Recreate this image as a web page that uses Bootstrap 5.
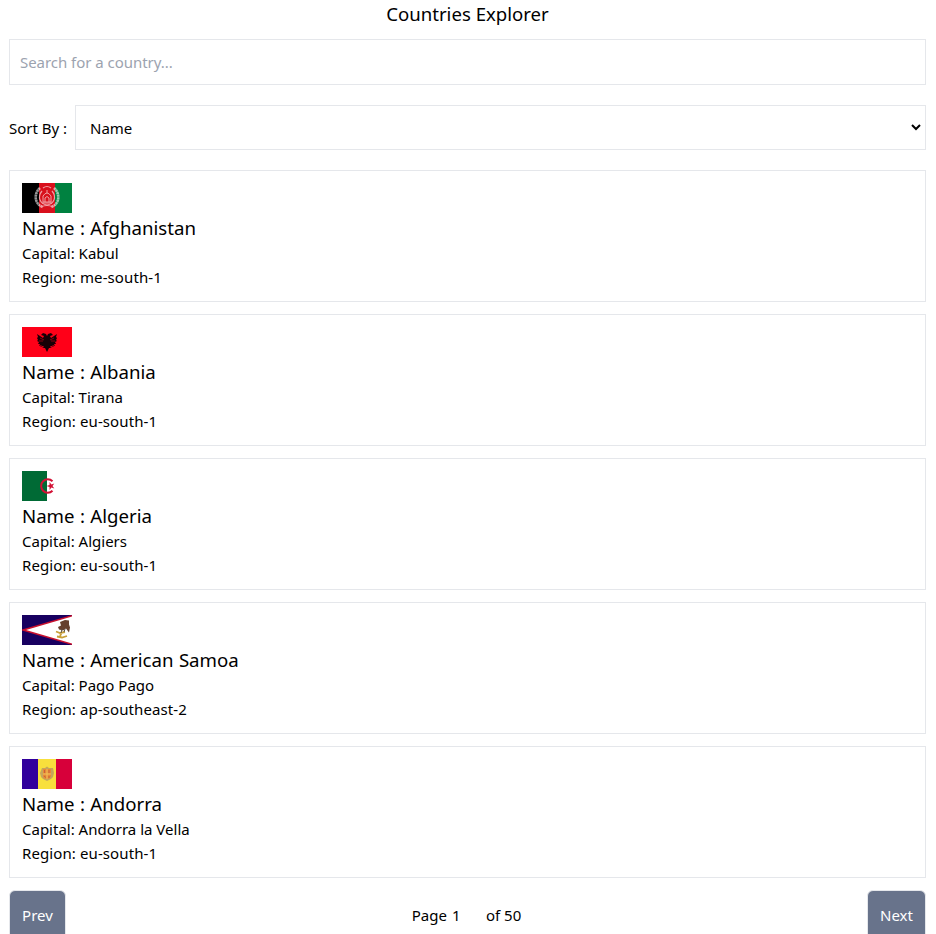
<!DOCTYPE html>
<html lang="en">
<head>
<meta charset="utf-8">
<meta name="viewport" content="width=device-width, initial-scale=1">
<title>Countries Explorer</title>
<link href="https://cdn.jsdelivr.net/npm/bootstrap@5.3.0/dist/css/bootstrap.min.css" rel="stylesheet">
<style>
body{font-family:"Segoe UI","Noto Sans","Open Sans",sans-serif;font-size:15px;line-height:24px;color:#000;background:#fff}
.explorer{padding:0 10px 0 9px}
.title{font-size:18.6px;line-height:28px;margin-bottom:11px}
.box,.form-control.box,.form-select.box{border:1px solid #e5e7eb;border-radius:0;color:#000;background-color:#fff}
.search.form-control{height:46px;padding:0 10px;font-size:15px;letter-spacing:-.04px;margin-bottom:20px}
.search::placeholder{color:#9ca3af;opacity:1}
.sort{gap:8px;margin-bottom:20px}
.sort label{width:58px;white-space:nowrap}
.sort .form-select{height:45px;padding:2px 24px 0 14px;font-size:15px;background-image:none}
.chevron{right:5px;top:18px;pointer-events:none}
.countries{gap:12px}
.country{height:132px;padding:12px}
.country h2{font-size:18.65px;line-height:28px;font-weight:400;margin:0;padding-top:1px;height:28px;word-spacing:.5px}
.country p{margin:0}
.country .region{letter-spacing:.1px}
.flag{width:50px;height:30px;display:block}
.pager{margin-top:12px}
.pager .btn{height:50px;padding:0 12px;font-size:15px;color:#fff;background:#68738b;border:1px solid #e5e7eb;border-radius:6px}
.prev{width:57px}.next{width:59px}
.page-no{width:39px;padding-left:5px}
</style>
<script src="https://cdn.jsdelivr.net/npm/bootstrap@5.3.0/dist/js/bootstrap.bundle.min.js"></script>
</head>
<body class="vh-100 overflow-hidden">
<main class="explorer">
<h1 class="title text-center fw-normal">Countries Explorer</h1>
<input class="form-control box search" type="text" placeholder="Search for a country..." aria-label="Search">
<div class="sort d-flex align-items-center">
<label for="sort">Sort By :</label>
<div class="position-relative flex-grow-1">
<select id="sort" class="form-select box"><option>Name</option><option>Capital</option></select>
<svg class="chevron position-absolute" width="10" height="8" viewBox="0 0 10 8"><path d="M1 2l4 4 4-4" fill="none" stroke="#000" stroke-width="2"/></svg>
</div>
</div>
<section class="countries d-flex flex-column">
<article class="country box">
<svg class="flag" viewBox="0 0 50 30"><path fill="#000" d="M0 0h17v30H0z"/><path fill="#d8101c" d="M17 0h16v30H17z"/><path fill="#008140" d="M33 0h17v30H33z"/><g fill="none" stroke="#fff" opacity=".6"><path d="M18 5C11 11 13 22 21 24M32 5c7 6 5 17-3 19" stroke-width="2.6" stroke-dasharray="2.2 .4"/><path d="M20 8c-5 6-2 13 5 14 7-1 10-8 5-14M19 24q6-3 12 0M21 5q4-3 8 0" stroke-width="1.2"/><path d="M21 19v-6q4-6 8 0v6zM23 19v-4q2-3 4 0v4M25 7v3M20 20h10" stroke-width="1"/></g></svg>
<h2>Name : Afghanistan</h2><p>Capital: Kabul</p><p class="region">Region: me-south-1</p>
</article>
<article class="country box">
<svg class="flag" viewBox="0 0 50 30"><path fill="#ff0018" d="M0 0h50v30H0z"/><path fill="#180006" d="M25 9l-1-2-3-1-2 2 3 1-1 2-6-4 1 3-1 1 1 2-1 1 2 1-1 2 2 0-1 2 3-1-2 2 3-1 1 1-2 1 3 0 2 4 2-4 3 0-2-1 1-1 3 1-2-2 3 1-1-2 2 0-1-2 2-1-1-1 1-2-1-1 1-3-6 4-1-2 3-1-2-2-3 1z"/><path stroke="#ff0018" stroke-width=".5" d="M18 11l4 2M17 14h4M32 11l-4 2M33 14h-4"/></svg>
<h2>Name : Albania</h2><p>Capital: Tirana</p><p class="region">Region: eu-south-1</p>
</article>
<article class="country box">
<svg class="flag" viewBox="0 0 50 30"><path fill="#fff" d="M0 0h50v30H0z"/><path fill="#006a35" d="M0 0h25v30H0z"/><path fill="none" stroke="#d21034" stroke-width="2" d="M30.500 10.200a6.700 6.700 0 1 0 0 9.600"/><path fill="#d21034" d="M24.500 15l3-.9.1-3 1.800 2.400 2.900-1-1.800 2.500 1.800 2.500-2.900-1-1.800 2.400-.1-3z"/></svg>
<h2>Name : Algeria</h2><p>Capital: Algiers</p><p class="region">Region: eu-south-1</p>
</article>
<article class="country box">
<svg class="flag" viewBox="0 0 50 30"><path fill="#180060" d="M0 0h50v30H0z"/><path fill="#c8102e" d="M50 0v30L0 15.500v-1z"/><path fill="#fff" d="M50 1.500v27L4 15z"/><path fill="#66402d" d="M38 7l5-2 4 .5 0 4 1 3-1 5-3-4-3 2-4-1-1-2.500 3-1.500z"/><path fill="none" stroke="#c9a03a" stroke-width="1.800" d="M34 16.500l4 1.500 5-1M35 21.500l5 1 5-1.500M40 17l-2 4"/><path fill="none" stroke="#5a5148" d="M40 14l-1 4M43 14l-1 3"/></svg>
<h2>Name : American Samoa</h2><p>Capital: Pago Pago</p><p class="region">Region: ap-southeast-2</p>
</article>
<article class="country box">
<svg class="flag" viewBox="0 0 50 30"><path fill="#31009c" d="M0 0h16v30H0z"/><path fill="#f8e03c" d="M16 0h18v30H16z"/><path fill="#d7003a" d="M34 0h16v30H34z"/><path fill="#c6a65a" d="M20 9l3 0 2-1.500 2 1.500 4 0 1 5-1 4-2 2-4 2-4-2-2-2-1-4z"/><path fill="#e88a36" d="M21 10h8v7q-1 3-4 3-4 0-4-3z"/><path fill="#efc25a" d="M24.500 10h1v10h-1zM21 14.500h8v1h-8z"/><path stroke="#c8603a" d="M22.500 11v3M27 11v3M22 17l2 1.500M26 18h2"/></svg>
<h2>Name : Andorra</h2><p>Capital: Andorra la Vella</p><p class="region">Region: eu-south-1</p>
</article>
</section>
<nav class="pager d-flex justify-content-between align-items-center" aria-label="Pages">
<button class="btn prev" type="button">Prev</button>
<div class="d-flex"><span>Page</span><span class="page-no">1</span><span>of 50</span></div>
<button class="btn next" type="button">Next</button>
</nav>
</main>
</body>
</html>
